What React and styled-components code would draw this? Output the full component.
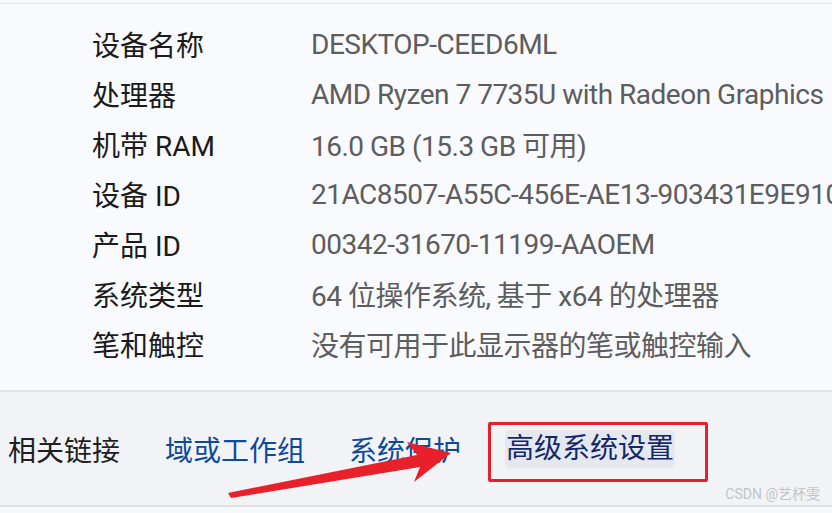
import React from "react";
import styled, { createGlobalStyle } from "styled-components";

const GlobalStyle = createGlobalStyle`
  html, body {
    margin: 0;
    padding: 0;
    background: #edf0f5;
    font-family: Roboto, "Noto Sans CJK SC", sans-serif;
    overflow: hidden;
  }
`;

const specs = [
  ["设备名称", "DESKTOP-CEED6ML"],
  ["处理器", "AMD Ryzen 7 7735U with Radeon Graphics"],
  ["机带 RAM", "16.0 GB (15.3 GB 可用)"],
  ["设备 ID", "21AC8507-A55C-456E-AE13-903431E9E910"],
  ["产品 ID", "00342-31670-11199-AAOEM"],
  ["系统类型", "64 位操作系统, 基于 x64 的处理器"],
  ["笔和触控", "没有可用于此显示器的笔或触控输入"],
];

const App = () => {
  return (
    <>
      <GlobalStyle />
      <Page>
        <SpecCard>
          {specs.map(([label, value]) => (
            <SpecRow key={label}>
              <Label>{label}</Label>
              <Value>{value}</Value>
            </SpecRow>
          ))}
        </SpecCard>
        <LinksBar>
          <BarTitle>相关链接</BarTitle>
          <LinkText>域或工作组</LinkText>
          <LinkText $last>系统保护</LinkText>
          <Highlight>
            <ActiveLink>高级系统设置</ActiveLink>
          </Highlight>
          <Watermark>CSDN @艺杯雯</Watermark>
        </LinksBar>
        <Arrow viewBox="0 0 832 513">
          <polygon points="228,493 417,455 407,442 451,453 414,482 420,467 231,498" fill="#e8202a" />
        </Arrow>
      </Page>
    </>
  );
};

const Page = styled.div`
  position: relative;
  width: 832px;
  height: 513px;
  padding-top: 3px;
  box-sizing: border-box;
  background: #f6f8fb;
`;

const SpecCard = styled.div`
  background: #f9fafd;
  border-top: 1px solid #e1e5ea;
  border-bottom: 2px solid #e0e3e8;
  padding: 15px 0 0 92px;
  height: 389px;
  box-sizing: border-box;
`;

const SpecRow = styled.div`
  display: grid;
  grid-template-columns: 219px 1fr;
  height: 50px;
  align-items: center;
  font-size: 28px;
  white-space: nowrap;
`;

const Label = styled.span`
  color: #1b1b1b;
`;

const Value = styled.span`
  color: #5d5d5d;
  letter-spacing: -0.5px;
`;

const LinksBar = styled.div`
  position: relative;
  display: flex;
  align-items: center;
  height: 115px;
  box-sizing: border-box;
  padding-left: 8px;
  background: #f2f3f7;
  border-bottom: 2px solid #dfe2e7;
  font-size: 28px;
  white-space: nowrap;
`;

const BarTitle = styled.span`
  color: #1f1f1f;
  margin-right: 45px;
`;

const LinkText = styled.span`
  color: #0c4a9b;
  margin-right: ${(p) => (p.$last ? "27px" : "44px")};
`;

const Highlight = styled.div`
  display: flex;
  align-items: center;
  box-sizing: border-box;
  width: 220px;
  height: 60px;
  margin-top: 6px;
  padding-left: 14px;
  border: 3px solid #e8202a;
  border-radius: 2px;
`;

const ActiveLink = styled.span`
  color: #13286a;
  background: #e6e8ef;
  border-radius: 5px;
  padding: 0 1px;
  line-height: 38px;
  margin-top: -6px;
`;

const Watermark = styled.span`
  position: absolute;
  right: 12px;
  bottom: 2px;
  font-size: 14px;
  color: #c3c5c9;
`;

const Arrow = styled.svg`
  position: absolute;
  left: 0;
  top: 0;
  width: 832px;
  height: 513px;
  pointer-events: none;
`;

export default App;
